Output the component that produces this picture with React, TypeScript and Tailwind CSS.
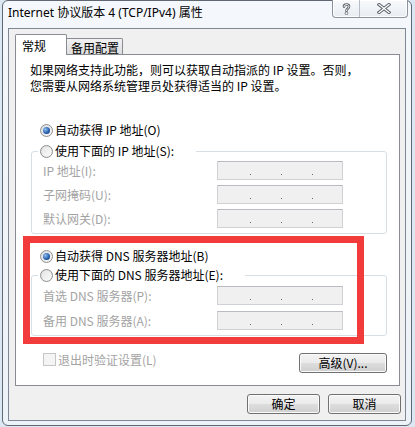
import React from "react";

const btnBg =
  "border border-[#707070] rounded-[3px] bg-[linear-gradient(#f3f3f3_0%,#ebebeb_48%,#dddddd_52%,#cfcfcf_100%)] shadow-[inset_0_0_0_1px_#fbfbfb] flex items-center justify-center text-[12px] leading-none text-black";

function Radio({ checked }: { checked?: boolean }) {
  return (
    <div className="w-[13px] h-[13px] shrink-0 rounded-full border border-[#8e8f8f] bg-[linear-gradient(135deg,#dcdcdc,#f8f8f8)] flex items-center justify-center">
      {checked ? (
        <div className="w-[7px] h-[7px] rounded-full bg-[radial-gradient(circle_at_35%_35%,#8fc0f0_0%,#2a62b0_55%,#0d3470_100%)]" />
      ) : (
        <div className="w-[9px] h-[9px] rounded-full bg-[linear-gradient(135deg,#e6e6e6,#fafafa)]" />
      )}
    </div>
  );
}

function IpBox() {
  return (
    <div className="w-[126px] h-[19px] border border-[#cfd1d4] border-t-[#b9bcc1] bg-[#f0f0f0] flex items-end pb-[4px] pl-[32px] gap-[30px]">
      <span className="w-px h-px bg-[#6a6a6a]" />
      <span className="w-px h-px bg-[#6a6a6a]" />
      <span className="w-px h-px bg-[#6a6a6a]" />
    </div>
  );
}

function FieldRow({ label }: { label: string }) {
  return (
    <div className="flex items-center h-[19px]">
      <div className="w-[185px] pl-[11px] text-[12px] leading-none text-[#a3a3a3]">{label}</div>
      <IpBox />
    </div>
  );
}

function Group({ legend, rows, gap }: { legend: string; rows: string[]; gap: string }) {
  return (
    <fieldset className="border border-[#d5dfe5] rounded-[3px] m-0 p-0 min-w-0">
      <legend className="ml-[6px] pl-[2px] pr-[22px] h-[14px] flex items-center gap-[2px] text-[12px] leading-none">
        <Radio />
        <span>{legend}</span>
      </legend>
      <div className={`flex flex-col pb-[5px] ${gap}`}>
        {rows.map((r) => (
          <FieldRow key={r} label={r} />
        ))}
      </div>
    </fieldset>
  );
}

export default function App() {
  return (
    <div className="w-[415px] h-[427px] bg-[#dbe7f2] overflow-hidden relative font-['Noto_Sans_CJK_SC',sans-serif] text-black">
      <div className="ml-[2px] w-[410px] h-[426px] border border-[#5f6873] rounded-[6px] bg-[linear-gradient(#f4f7fb,#edf2f8)] flex flex-col">
        {/* title bar */}
        <div className="h-[27px] flex items-start justify-between">
          <div className="pl-[5px] pt-[4px] text-[12px] leading-[16px] font-['Noto_Sans','Noto_Sans_CJK_SC',sans-serif]">
            Internet 协议版本 4 (TCP/IPv4) 属性
          </div>
          <div className="flex -mt-px mr-[3px] h-[18px] border border-t-0 border-[#8b949e] rounded-b-[4px] bg-[linear-gradient(#f8fafc,#e8edf2)] shadow-[inset_0_0_0_1px_#ffffff]">
            <div className="w-[27px] flex items-center justify-center border-r border-[#b5bcc4]">
              <svg width="9" height="12" viewBox="0 0 9 12">
                <path d="M2 3.6 C2 0.8 7 0.8 7 3.6 C7 5.6 4.5 5.4 4.5 7.8" fill="none" stroke="#5a5f66" strokeWidth="2.6" strokeLinecap="round" />
                <path d="M2 3.6 C2 0.8 7 0.8 7 3.6 C7 5.6 4.5 5.4 4.5 7.8" fill="none" stroke="#ffffff" strokeWidth="1" strokeLinecap="round" />
                <circle cx="4.5" cy="10.3" r="1.4" fill="#ffffff" stroke="#5a5f66" strokeWidth="0.8" />
              </svg>
            </div>
            <div className="w-[47px] flex items-center justify-center">
              <svg width="14" height="11" viewBox="0 0 14 11">
                <path d="M2 1.5 L12 9.5 M12 1.5 L2 9.5" fill="none" stroke="#5a5f66" strokeWidth="3.2" strokeLinecap="square" />
                <path d="M2 1.5 L12 9.5 M12 1.5 L2 9.5" fill="none" stroke="#ffffff" strokeWidth="1.3" strokeLinecap="square" />
              </svg>
            </div>
          </div>
        </div>

        {/* client area */}
        <div className="ml-[5px] mr-[4px] w-[398px] h-[393px] border border-[#7d8894] bg-[#f0f0f0] flex flex-col">
          {/* tabs */}
          <div className="flex items-end h-[21px] mt-[5px] ml-[6px] -mb-px relative z-10 text-[12px] leading-none">
            <div className="w-[52px] h-[21px] bg-white border border-b-0 border-[#898c95] rounded-t-[2px] pl-[6px] pt-[5px]">常规</div>
            <div className="w-[56px] h-[16px] mb-px bg-[linear-gradient(#f2f2f2,#dedede)] border border-l-0 border-b-0 border-[#898c95] rounded-tr-[2px] pl-[4px] pt-[3px]">
              备用配置
            </div>
          </div>

          {/* panel */}
          <div className="ml-[6px] w-[385px] h-[332px] bg-white border border-[#898c95] flex flex-col pl-[15px] pr-[12px]">
            <div className="mt-[7px] -ml-px text-[12px] leading-[16px]">
              <div>如果网络支持此功能，则可以获取自动指派的 IP 设置。否则，</div>
              <div>您需要从网络系统管理员处获得适当的 IP 设置。</div>
            </div>

            <div className="mt-[26px] h-[20px] ml-[9px] flex items-center gap-[2px] text-[12px] leading-none">
              <Radio checked />
              <span>自动获得 IP 地址(O)</span>
            </div>
            <div className="mt-[4px]">
              <Group legend="使用下面的 IP 地址(S):" rows={["IP 地址(I):", "子网掩码(U):", "默认网关(D):"]} gap="pt-[3px] gap-[5px]" />
            </div>

            <div className="mt-[12px] h-[20px] ml-[9px] flex items-center gap-[2px] text-[12px] leading-none">
              <Radio checked />
              <span>自动获得 DNS 服务器地址(B)</span>
            </div>
            <div className="mt-[2px]">
              <Group legend="使用下面的 DNS 服务器地址(E):" rows={["首选 DNS 服务器(P):", "备用 DNS 服务器(A):"]} gap="pt-[4px] gap-[6px]" />
            </div>

            <div className="mt-[17px] flex items-start justify-between">
              <div className="ml-[12px] h-[13px] flex items-center gap-[2px] text-[12px] leading-none text-[#a3a3a3]">
                <div className="w-[13px] h-[13px] border border-[#c6c6c6] bg-[#f4f4f4]" />
                <span>退出时验证设置(L)</span>
              </div>
              <div className={`w-[88px] h-[20px] ${btnBg}`}>高级(V)...</div>
            </div>
          </div>

          {/* dialog buttons */}
          <div className="mt-[8px] flex justify-end gap-[8px] pr-[4px]">
            <div className={`w-[73px] h-[20px] ${btnBg}`}>确定</div>
            <div className={`w-[73px] h-[20px] ${btnBg}`}>取消</div>
          </div>
        </div>
      </div>

      {/* red annotation box */}
      <div className="absolute left-[23px] top-[236px] w-[341px] h-[108px] border-[7px] border-[#f23b3b] pointer-events-none" />
    </div>
  );
}
